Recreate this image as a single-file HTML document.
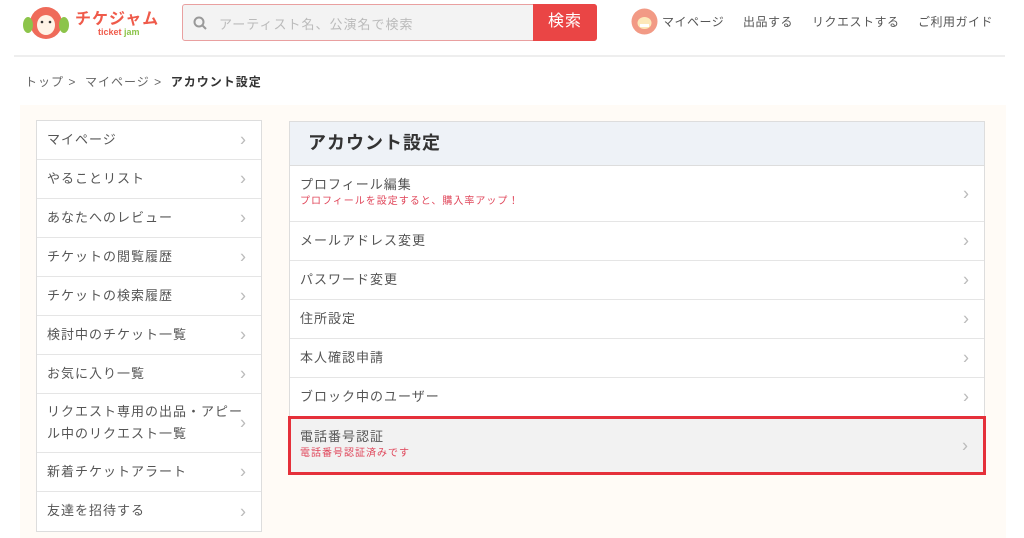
<!DOCTYPE html>
<html><head><meta charset="utf-8"><style>
*{margin:0;padding:0;box-sizing:border-box}
body{width:1024px;height:538px;background:#fff;font-family:"Liberation Sans","Noto Sans CJK JP",sans-serif;color:#555;position:relative;overflow:hidden;letter-spacing:1px}
.abs{position:absolute}
.hline{left:14px;top:55px;width:991px;height:2px;background:#eee}
.cream{left:20px;top:105px;width:986px;height:433px;background:#fffbf6}
.search{left:182px;top:4px;width:415px;height:37px;border:1px solid #e9a0a0;border-radius:3px;background:#f3f3f3}
.search span{position:absolute;left:36px;top:9px;font-size:13px;color:#bbb}
.btn{position:absolute;right:-1px;top:-1px;width:64px;height:37px;background:#ea4545;color:#fff;font-size:16px;text-align:center;line-height:36px;border-radius:0 3px 3px 0}
.nav{top:13px;font-size:12px;color:#555;letter-spacing:0.5px}
.side{left:36px;top:120px;width:226px;background:#fff;border:1px solid #ddd}
.side div{height:39px;border-bottom:1px solid #e5e5e5;font-size:13px;padding:0 0 0 10px;line-height:38px;position:relative}
.side div:last-child{border-bottom:none}
.side div:after,.row:after{content:"›";position:absolute;right:14px;top:50%;transform:translateY(-52%);font-size:18px;color:#bbb;line-height:1}
.panel{left:289px;top:121px;width:696px;background:#fff;border:1px solid #ddd}
.ph{height:44px;background:#eef2f7;border-bottom:1px solid #ddd;font-size:18px;font-weight:bold;color:#333;padding-left:18px;line-height:43px}
.row{height:39px;border-bottom:1px solid #e5e5e5;font-size:13px;padding-left:10px;line-height:38px;position:relative}
.sub{font-size:10px;color:#e0465a;line-height:14px}
</style></head><body>
<div class="abs hline"></div>
<div class="abs cream"></div>
<svg class="abs" style="left:22px;top:4px" width="50" height="36"><circle cx="24" cy="19" r="16" fill="#ef6b5a"/><ellipse cx="6" cy="21" rx="5" ry="8" fill="#8cc44a"/><ellipse cx="42" cy="21" rx="5" ry="8" fill="#8cc44a"/><ellipse cx="24" cy="21" rx="9" ry="10" fill="#fff3e6"/><circle cx="20" cy="18" r="1.3" fill="#333"/><circle cx="28" cy="18" r="1.3" fill="#333"/></svg>
<div class="abs" style="left:75px;top:5px;font-size:16px;font-weight:bold;color:#ef5a4a;letter-spacing:1px">チケジャム</div>
<div class="abs" style="left:98px;top:27px;font-size:9px;font-weight:bold;color:#ef5a4a;letter-spacing:0">ticket <span style="color:#8cc44a">jam</span></div>
<div class="abs search"><svg style="position:absolute;left:10px;top:11px" width="14" height="14"><circle cx="6" cy="6" r="4.5" stroke="#999" stroke-width="2" fill="none"/><path d="M9.5 9.5L13 13" stroke="#999" stroke-width="2"/></svg><span>アーティスト名、公演名で検索</span><div class="btn">検索</div></div>
<svg class="abs" style="left:631px;top:8px" width="27" height="27"><circle cx="13.5" cy="13.5" r="13" fill="#f29a85"/><ellipse cx="13.5" cy="15" rx="7" ry="6" fill="#fde8b8"/><rect x="9" y="16" width="9" height="3" fill="#fff"/></svg>
<div class="abs nav" style="left:662px">マイページ</div>
<div class="abs nav" style="left:743px">出品する</div>
<div class="abs nav" style="left:812px">リクエストする</div>
<div class="abs nav" style="left:918px">ご利用ガイド</div>
<div class="abs" style="left:25px;top:73px;font-size:12px;color:#666">トップ &gt;&nbsp; マイページ &gt;&nbsp; <b style="color:#333">アカウント設定</b></div>
<div class="abs side">
<div>マイページ</div><div>やることリスト</div><div>あなたへのレビュー</div><div>チケットの閲覧履歴</div><div>チケットの検索履歴</div><div>検討中のチケット一覧</div><div>お気に入り一覧</div>
<div style="height:59px;line-height:22px;padding-top:7px">リクエスト専用の出品・アピー<br>ル中のリクエスト一覧</div>
<div>新着チケットアラート</div><div>友達を招待する</div>
</div>
<div class="abs panel">
<div class="ph">アカウント設定</div>
<div class="row" style="height:56px;line-height:20px;padding-top:9px">プロフィール編集<div class="sub">プロフィールを設定すると、購入率アップ！</div></div>
<div class="row">メールアドレス変更</div>
<div class="row">パスワード変更</div>
<div class="row">住所設定</div>
<div class="row">本人確認申請</div>
<div class="row">ブロック中のユーザー</div>
<div class="row" style="height:59px;line-height:20px;padding-top:8px;background:#f2f2f2;border:3px solid #e5303a;margin:-1px -2px -2px -2px;padding-left:9px">電話番号認証<div class="sub">電話番号認証済みです</div></div>
</div>
</body></html>
